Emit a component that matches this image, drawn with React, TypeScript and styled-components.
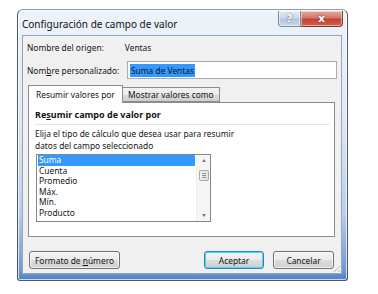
import React from "react";
import styled, { createGlobalStyle } from "styled-components";

const GlobalStyle = createGlobalStyle`
  html, body {
    margin: 0;
    padding: 0;
    background: #ffffff;
  }
  body {
    font-family: "Noto Sans", "Liberation Sans", sans-serif;
    font-size: 8.4px;
    color: #141414;
  }
`;

const Page = styled.div`
  padding: 9px 0 0 17px;
`;

const Window = styled.div`
  width: 329px;
  height: 270px;
  border: 1px solid #4d5866;
  border-top-color: #8a97a8;
  border-radius: 6px 6px 3px 3px;
  background: linear-gradient(
    180deg,
    #eef3f9 0%,
    #dfe8f4 40%,
    #b9cfea 75%,
    #6e9bd5 96%,
    #4f82c6 100%
  );
  box-shadow: inset 0 0 0 1px rgba(255, 255, 255, 0.7);
  display: flex;
  flex-direction: column;
  position: relative;
`;

const TitleBar = styled.div`
  height: 25px;
  display: flex;
  align-items: center;
  padding-left: 4px;
`;

const TitleText = styled.span`
  font-size: 10px;
  color: #111111;
  padding-top: 2px;
`;

const CaptionButtons = styled.div`
  position: absolute;
  top: 1px;
  right: 4px;
  display: flex;
`;

const CaptionButton = styled.div<{ $close?: boolean }>`
  width: ${(p) => (p.$close ? 42 : 23)}px;
  height: 16px;
  box-sizing: border-box;
  border: 1px solid ${(p) => (p.$close ? "#7d3a33" : "#7f8b9b")};
  border-left-width: ${(p) => (p.$close ? 0 : 1)}px;
  border-top: none;
  border-radius: ${(p) => (p.$close ? "0 0 4px 0" : "0 0 0 4px")};
  background: ${(p) =>
    p.$close
      ? "linear-gradient(180deg, #e8a99c 0%, #d47766 45%, #c24533 55%, #d1604b 100%)"
      : "linear-gradient(180deg, #e4ebf4 0%, #ccd8e7 45%, #b6c6da 55%, #c8d6e8 100%)"};
  box-shadow: inset 0 0 0 1px rgba(255, 255, 255, 0.45);
  display: flex;
  align-items: center;
  justify-content: center;
  color: #ffffff;
  font-family: "DejaVu Sans", sans-serif;
  font-weight: bold;
  font-size: ${(p) => (p.$close ? 11 : 10)}px;
  text-shadow: 0 0 2px rgba(40, 40, 60, 0.8);
`;

const Client = styled.div`
  flex: 1;
  margin: 0 5px 6px 4px;
  border: 1px solid #97a6b9;
  background: #f0f0f0;
  display: flex;
  flex-direction: column;
  padding: 4px 4px 0 4px;
`;

const Row = styled.div`
  display: flex;
  align-items: center;
  height: 14px;
`;

const FieldRow = styled.div`
  display: flex;
  align-items: center;
  margin-top: 7px;
  height: 18px;
`;

const Label = styled.span<{ $width?: number }>`
  ${(p) => (p.$width ? `width: ${p.$width}px;` : "")}
  white-space: nowrap;
`;

const Value = styled.span`
  margin-left: 21px;
`;

const Input = styled.div`
  flex: 1;
  height: 18px;
  box-sizing: border-box;
  border: 1px solid #abadb3;
  border-top-color: #a3a6ae;
  background: #ffffff;
  display: flex;
  align-items: center;
  padding-left: 2px;
`;

const Selected = styled.span`
  background: #3399ff;
  color: #101820;
  padding: 0 1px;
  line-height: 13px;
`;

const Tabs = styled.div`
  margin-top: 6px;
  margin-left: 1px;
  margin-right: 2px;
  display: flex;
  flex-direction: column;
`;

const TabStrip = styled.div`
  display: flex;
  align-items: flex-end;
  height: 17px;
  position: relative;
  z-index: 1;
`;

const Tab = styled.div<{ $active?: boolean }>`
  box-sizing: border-box;
  width: ${(p) => (p.$active ? 95 : 97)}px;
  height: ${(p) => (p.$active ? 18 : 15)}px;
  margin-bottom: ${(p) => (p.$active ? -1 : 0)}px;
  padding-left: ${(p) => (p.$active ? 7 : 5)}px;
  border: 1px solid #898c95;
  border-bottom: ${(p) => (p.$active ? "none" : "1px solid #898c95")};
  border-left-width: ${(p) => (p.$active ? 1 : 0)}px;
  background: ${(p) =>
    p.$active
      ? "#ffffff"
      : "linear-gradient(180deg, #f2f2f2 0%, #ebebeb 50%, #dddddd 51%, #cfcfcf 100%)"};
  display: flex;
  align-items: center;
  white-space: nowrap;
`;

const TabPanel = styled.div`
  height: 135px;
  box-sizing: border-box;
  border: 1px solid #898c95;
  background: #ffffff;
  padding: 6px 4px 0 6px;
  display: flex;
  flex-direction: column;
`;

const SectionTitle = styled.div`
  font-weight: bold;
  font-size: 9px;
  line-height: 12px;
  padding-bottom: 3px;
  border-bottom: 1px solid #e3e3e3;
`;

const Description = styled.div`
  margin-top: 3px;
  line-height: 12px;
`;

const ListBox = styled.div`
  margin-top: 2px;
  margin-left: 1px;
  width: 175px;
  height: 68px;
  box-sizing: border-box;
  border: 1px solid #828790;
  display: flex;
`;

const ListItems = styled.div`
  flex: 1;
  padding: 0 1px;
`;

const ListItem = styled.div<{ $selected?: boolean }>`
  height: 10.6px;
  line-height: 10.6px;
  padding-left: 1px;
  background: ${(p) => (p.$selected ? "#3399ff" : "transparent")};
  color: ${(p) => (p.$selected ? "#ffffff" : "#141414")};
  white-space: nowrap;
`;

const ScrollBar = styled.div`
  width: 14px;
  background: #f6f6f6;
  border-left: 1px solid #ececec;
  display: flex;
  flex-direction: column;
  align-items: center;
  justify-content: space-between;
  padding: 2px 0;
  box-sizing: border-box;
`;

const Arrow = styled.div<{ $down?: boolean }>`
  width: 0;
  height: 0;
  border-left: 2.5px solid transparent;
  border-right: 2.5px solid transparent;
  ${(p) => (p.$down ? "border-top" : "border-bottom")}: 3px solid #7a7a7a;
  margin: 2px 0;
`;

const Thumb = styled.div`
  width: 10px;
  height: 11px;
  box-sizing: border-box;
  border: 1px solid #a8a8a8;
  border-radius: 2px;
  background: linear-gradient(90deg, #f4f4f4, #e2e2e2);
  margin-top: -26px;
  display: flex;
  flex-direction: column;
  justify-content: center;
  align-items: center;
  gap: 1px;
`;

const Grip = styled.div`
  width: 4px;
  height: 1px;
  background: #8d8d8d;
`;

const ButtonRow = styled.div`
  margin-top: 14px;
  margin-left: 2px;
  display: flex;
  align-items: center;
`;

const Spacer = styled.div`
  flex: 1;
`;

const Button = styled.div<{ $width: number; $default?: boolean }>`
  width: ${(p) => p.$width}px;
  height: 18px;
  box-sizing: border-box;
  border: 1px solid ${(p) => (p.$default ? "#3c7fb1" : "#707070")};
  border-radius: 3px;
  background: linear-gradient(180deg, #f4f4f4 0%, #ebebeb 48%, #dddddd 52%, #cfcfcf 100%);
  box-shadow: ${(p) =>
    p.$default ? "inset 0 0 0 1px #48d9ff" : "inset 0 0 0 1px rgba(255,255,255,0.7)"};
  display: flex;
  align-items: center;
  justify-content: center;
  white-space: nowrap;
`;

const Gap = styled.div<{ $w: number }>`
  width: ${(p) => p.$w}px;
`;

const ResizeGrip = styled.div`
  position: absolute;
  right: 7px;
  bottom: 8px;
  width: 9px;
  height: 9px;
  background: repeating-linear-gradient(135deg, transparent 0 2px, #b8b8b8 2px 3px);
  clip-path: polygon(100% 0, 100% 100%, 0 100%);
`;

const items = ["Suma", "Cuenta", "Promedio", "Máx.", "Mín.", "Producto"];

export default function App() {
  return (
    <Page>
      <GlobalStyle />
      <Window>
        <TitleBar>
          <TitleText>Configuración de campo de valor</TitleText>
        </TitleBar>
        <CaptionButtons>
          <CaptionButton>?</CaptionButton>
          <CaptionButton $close>x</CaptionButton>
        </CaptionButtons>
        <Client>
          <Row>
            <Label>Nombre del origen:</Label>
            <Value>Ventas</Value>
          </Row>
          <FieldRow>
            <Label $width={100}>
              Nom<u>b</u>re personalizado:
            </Label>
            <Input>
              <Selected>Suma de Ventas</Selected>
            </Input>
          </FieldRow>
          <Tabs>
            <TabStrip>
              <Tab $active>Resumir valores por</Tab>
              <Tab>Mostrar valores como</Tab>
            </TabStrip>
            <TabPanel>
              <SectionTitle>
                Re<u>s</u>umir campo de valor por
              </SectionTitle>
              <Description>
                Elija el tipo de cálculo que desea usar para resumir
                <br />
                datos del campo seleccionado
              </Description>
              <ListBox>
                <ListItems>
                  {items.map((it, i) => (
                    <ListItem key={it} $selected={i === 0}>
                      {it}
                    </ListItem>
                  ))}
                </ListItems>
                <ScrollBar>
                  <Arrow />
                  <Thumb>
                    <Grip />
                    <Grip />
                    <Grip />
                  </Thumb>
                  <Arrow $down />
                </ScrollBar>
              </ListBox>
            </TabPanel>
          </Tabs>
          <ButtonRow>
            <Button $width={91}>
              <span>
                Formato de <u>n</u>úmero
              </span>
            </Button>
            <Spacer />
            <Button $width={60} $default>
              Aceptar
            </Button>
            <Gap $w={9} />
            <Button $width={61}>Cancelar</Button>
            <Gap $w={3} />
          </ButtonRow>
        </Client>
        <ResizeGrip />
      </Window>
    </Page>
  );
}
